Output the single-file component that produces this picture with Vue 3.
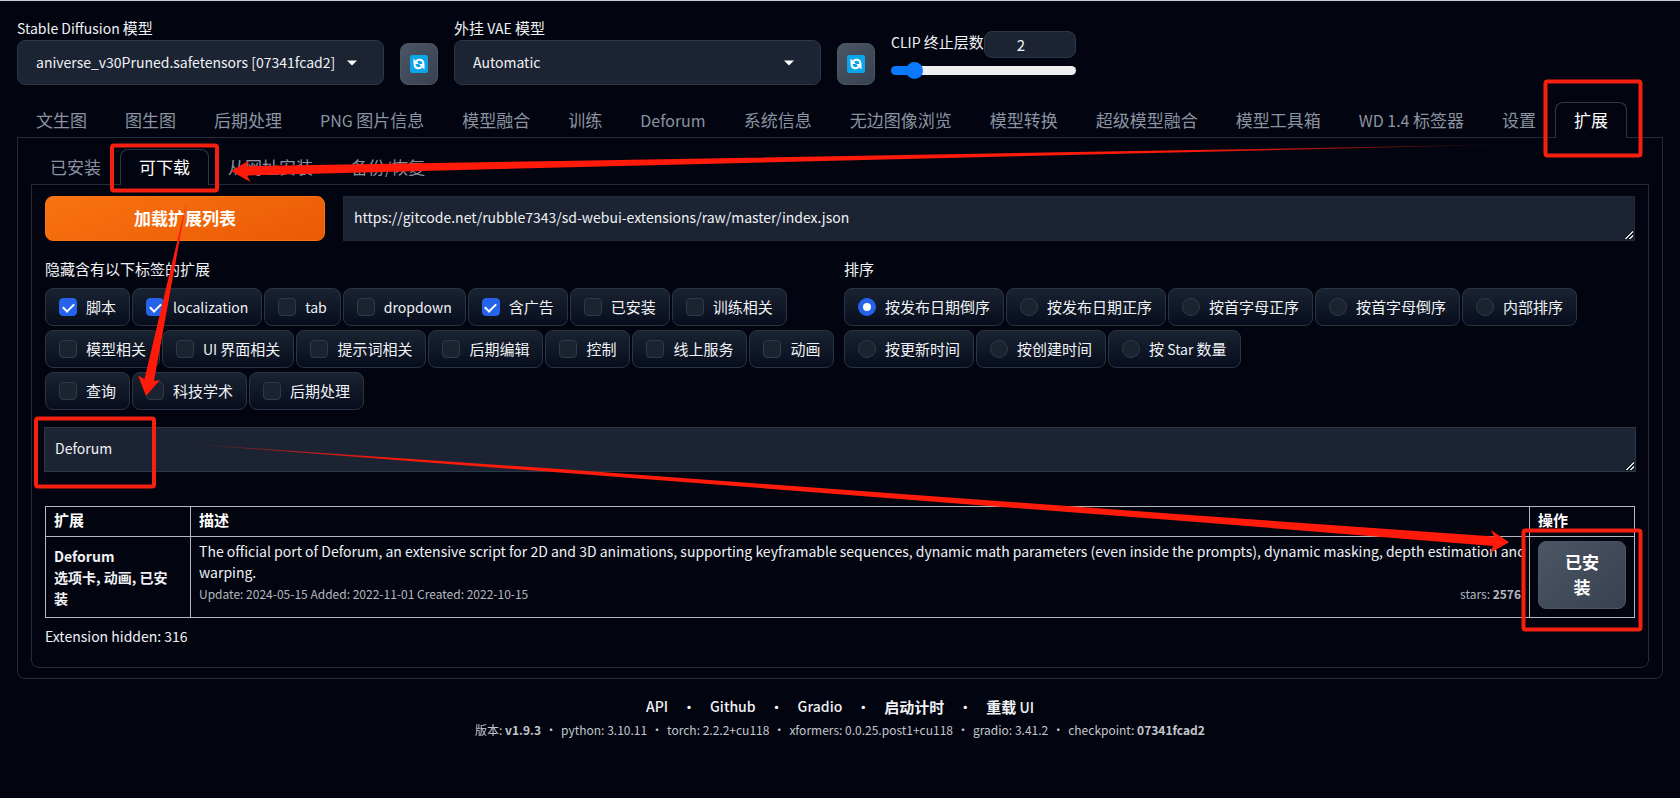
<script setup>
import { ref, h } from 'vue'

const checkpoint = ref('aniverse_v30Pruned.safetensors [07341fcad2]')
const vae = ref('Automatic')
const clipSkip = ref(2)
const indexUrl = ref('https://gitcode.net/rubble7343/sd-webui-extensions/raw/master/index.json')
const search = ref('Deforum')

const mainTabs = ['文生图', '图生图', '后期处理', 'PNG 图片信息', '模型融合', '训练', 'Deforum', '系统信息', '无边图像浏览', '模型转换', '超级模型融合', '模型工具箱', 'WD 1.4 标签器', '设置', '扩展']
const subTabs = ['已安装', '可下载', '从网址安装', '备份/恢复']
const activeMain = ref('扩展')
const activeSub = ref('可下载')

const tags = ['脚本', 'localization', 'tab', 'dropdown', '含广告', '已安装', '训练相关', '模型相关', 'UI 界面相关', '提示词相关', '后期编辑', '控制', '线上服务', '动画', '查询', '科技学术', '后期处理']
const hidden = ref(['脚本', 'localization', '含广告'])

const orders = ['按发布日期倒序', '按发布日期正序', '按首字母正序', '按首字母倒序', '内部排序', '按更新时间', '按创建时间', '按 Star 数量']
const order = ref('按发布日期倒序')

// Latin runs are set one size smaller than the Chinese text around them
const Mixed = (props) => h('span', props.text.split(/([ -~]+)/).filter(Boolean)
  .map((s) => h('span', { class: /^[ -~]/.test(s) ? 'latin' : 'han' }, s)))
Mixed.props = ['text']
</script>

<template>
  <div class="app">
    <header class="quick">
      <div class="field model">
        <label for="ckpt"><Mixed text="Stable Diffusion 模型" /></label>
        <div class="select">
          <select id="ckpt" v-model="checkpoint"><option>aniverse_v30Pruned.safetensors [07341fcad2]</option></select>
          <svg class="caret" viewBox="0 0 10 6"><path d="M0 0.5h10L5 5.5z" /></svg>
        </div>
      </div>
      <button class="refresh" aria-label="刷新模型">
        <svg viewBox="0 0 18 18"><rect width="18" height="18" rx="2" fill="#0aa5ea" /><g fill="none" stroke="#fff" stroke-width="2"><path d="M6 6.600C8 3.600 13.600 4 13.400 9" /><path d="M12 11.400C10 14.400 4.400 14 4.600 9" /></g><path d="M3.500 3.500V9H9z M14.500 14.500V9H9z" fill="#fff" /></svg>
      </button>
      <div class="field model">
        <label for="vae"><Mixed text="外挂 VAE 模型" /></label>
        <div class="select">
          <select id="vae" v-model="vae"><option>Automatic</option></select>
          <svg class="caret" viewBox="0 0 10 6"><path d="M0 0.5h10L5 5.5z" /></svg>
        </div>
      </div>
      <button class="refresh" aria-label="刷新 VAE">
        <svg viewBox="0 0 18 18"><rect width="18" height="18" rx="2" fill="#0aa5ea" /><g fill="none" stroke="#fff" stroke-width="2"><path d="M6 6.600C8 3.600 13.600 4 13.400 9" /><path d="M12 11.400C10 14.400 4.400 14 4.600 9" /></g><path d="M3.500 3.500V9H9z M14.500 14.500V9H9z" fill="#fff" /></svg>
      </button>
      <div class="clip">
        <div class="clip-head">
          <label for="clip"><Mixed text="CLIP 终止层数" /></label>
          <input id="clip" v-model="clipSkip" class="number" type="text" inputmode="numeric">
        </div>
        <input v-model="clipSkip" class="slider" type="range" min="1" max="12" aria-label="CLIP 终止层数">
      </div>
    </header>

    <nav class="tabs">
      <button v-for="t in mainTabs" :key="t" class="tab" :class="{ active: t === activeMain }" @click="activeMain = t"><Mixed :text="t" /></button>
    </nav>
    <main class="panel outer">
      <nav class="tabs">
        <button v-for="t in subTabs" :key="t" class="tab" :class="{ active: t === activeSub }" @click="activeSub = t"><Mixed :text="t" /></button>
      </nav>
      <section class="panel inner">
        <div class="load">
          <button class="primary">加载扩展列表</button>
          <textarea v-model="indexUrl" rows="1" aria-label="扩展列表网址"></textarea>
        </div>
        <div class="filters">
          <fieldset>
            <legend>隐藏含有以下标签的扩展</legend>
            <div class="chips">
              <label v-for="t in tags" :key="t" class="chip"><input v-model="hidden" type="checkbox" :value="t"><Mixed :text="t" /></label>
            </div>
          </fieldset>
          <fieldset>
            <legend>排序</legend>
            <div class="chips">
              <label v-for="o in orders" :key="o" class="chip"><input v-model="order" type="radio" name="order" :value="o"><Mixed :text="o" /></label>
            </div>
          </fieldset>
        </div>
        <textarea v-model="search" class="search" rows="1" aria-label="搜索"></textarea>
        <table>
          <thead>
            <tr><th class="c-ext">扩展</th><th>描述</th><th class="c-act">操作</th></tr>
          </thead>
          <tbody>
            <tr>
              <td class="ext"><b><a href="#">Deforum</a><br>选项卡, 动画, 已安装</b></td>
              <td class="desc">
                The official port of Deforum, an extensive script for 2D and 3D animations, supporting keyframable sequences, dynamic math parameters (even inside the prompts), dynamic masking, depth estimation and warping.
                <div class="info"><span>Update: 2024-05-15 Added: 2022-11-01 Created: 2022-10-15</span><span>stars: <b>2576</b></span></div>
              </td>
              <td class="act"><button class="installed">已安装</button></td>
            </tr>
          </tbody>
        </table>
        <p class="hidden-count">Extension hidden: 316</p>
      </section>
    </main>

    <footer>
      <div class="links">
        <a href="#">API</a><i>•</i><a href="#">Github</a><i>•</i><a href="#">Gradio</a><i>•</i><a href="#"><b>启动计时</b></a><i>•</i><a href="#"><b>重载</b> UI</a>
      </div>
      <div class="versions">
        <span>版本: <b>v1.9.3</b></span><i>•</i><span>python: 3.10.11</span><i>•</i><span>torch: 2.2.2+cu118</span><i>•</i><span>xformers: 0.0.25.post1+cu118</span><i>•</i><span>gradio: 3.41.2</span><i>•</i><span>checkpoint: <b>07341fcad2</b></span>
      </div>
    </footer>

    <svg class="marks" width="1680" height="798" viewBox="0 0 1680 798" aria-hidden="true">
      <defs>
        <linearGradient id="g1" gradientUnits="userSpaceOnUse" x1="1510" y1="0" x2="1180" y2="0"><stop offset="0" stop-color="#ff1a0a" stop-opacity="0.2" /><stop offset="1" stop-color="#ff1a0a" /></linearGradient>
        <linearGradient id="g3" gradientUnits="userSpaceOnUse" x1="182" y1="0" x2="400" y2="0"><stop offset="0" stop-color="#ff1a0a" stop-opacity="0.2" /><stop offset="1" stop-color="#ff1a0a" /></linearGradient>
      </defs>
      <g fill="none" stroke="#f5200f" stroke-width="4">
        <rect x="1545.500" y="81.500" width="95" height="74" rx="2" />
        <rect x="112" y="145.500" width="105" height="45" rx="2" />
        <rect x="36" y="418.500" width="118" height="68" rx="2" />
        <rect x="1523.500" y="530.500" width="117" height="99" rx="2" />
      </g>
      <path fill="url(#g1)" d="M231 171L249 160.500L246.500 166L560 161L1120 151.300L1510 144.500L1120 153.800L560 167.500L247 175.500L250.500 182Z" />
      <path fill="#ff1a0a" d="M146 396L138 375.500L144.500 379L186.500 202L154 381L160 380Z" />
      <path fill="url(#g3)" d="M1509 542.300L1491 530L1494 536.500L1200 515.700L560 469L182 443.500L560 472.500L1200 522.300L1493 546L1490 553Z" />
    </svg>
  </div>
</template>

<style>
html, body { margin: 0; background: #020510; }
</style>

<style scoped>
.app {
  position: relative;
  box-sizing: border-box;
  min-height: 100vh;
  padding: 16px 17px 0;
  border-top: 1px solid #c3ced6;
  background: #020510;
  color: #f0f2f5;
  font: 15px/22px "Noto Sans CJK SC", sans-serif;
}
.app * { box-sizing: border-box; }
.app :deep(.latin) { font-size: 14px; }
button, input, select, textarea { font: inherit; color: inherit; margin: 0; }
button { cursor: pointer; }
a { color: inherit; text-decoration: none; }
i { font-style: normal; }

.quick { display: flex; align-items: flex-end; gap: 16px; }
.field { display: flex; flex-direction: column; gap: 1px; }
.model { width: 367px; }
.select { position: relative; }
select {
  appearance: none;
  width: 100%;
  height: 45px;
  padding: 0 32px 2px 18px;
  border: 1px solid #2d3846;
  border-radius: 8px;
  background: #1c2433;
  font-size: 14px;
}
.caret { position: absolute; right: 27px; top: 20px; width: 10px; height: 6px; fill: #fff; }
.refresh {
  display: flex;
  align-items: center;
  justify-content: center;
  width: 38px;
  height: 42px;
  padding: 0;
  border: 1px solid #4b5563;
  border-radius: 8px;
  background: linear-gradient(135deg, #4b5563, #374151);
}
.refresh svg { width: 18px; height: 18px; }
.clip { width: 185px; align-self: stretch; padding-top: 14px; }
.clip-head { display: flex; justify-content: space-between; align-items: flex-start; white-space: nowrap; }
.number {
  flex: 0 0 92px;
  width: 92px;
  height: 27px;
  padding: 0 18px 0 0;
  border: 1px solid #2d3846;
  border-radius: 8px;
  background: #1c2433;
  text-align: center;
}
.slider { appearance: none; display: block; width: 100%; height: 18px; margin-top: 3px; background: transparent; }
.slider::-webkit-slider-runnable-track { height: 9px; border-radius: 5px; background: linear-gradient(90deg, #0a78ff 23px, #efefef 23px); }
.slider::-webkit-slider-thumb { appearance: none; width: 17px; height: 17px; margin-top: -4px; border-radius: 50%; background: #0a78ff; }

.tabs { display: flex; position: relative; margin-bottom: -1px; }
.quick + .tabs { margin-top: 17px; }
.tab {
  height: 36px;
  padding: 0 18px 2px;
  border: 1px solid transparent;
  border-bottom: 0;
  border-radius: 8px 8px 0 0;
  background: transparent;
  color: #8b93a0;
  font-size: 17px;
  line-height: 24px;
  white-space: nowrap;
}
.tab :deep(.latin) { font-size: 16px; }
.tab.active { border-color: #2d3846; background: #020510; color: #fff; }
.panel { border: 1px solid #242d3b; border-radius: 0 0 8px 8px; }
.outer { padding: 11px 13px 10px; }
.inner { padding: 11px 13px 20px; }

.load { display: flex; gap: 18px; }
.primary {
  flex: 0 0 280px;
  padding-bottom: 2px;
  border: 1px solid #f97316;
  border-radius: 8px;
  background: linear-gradient(160deg, #f97310, #ea5a05);
  color: #fff;
  font-size: 17px;
  font-weight: 700;
}
textarea {
  display: block;
  width: 100%;
  height: 45px;
  padding: 9px 10px;
  border: 1px solid #1f2937;
  border-radius: 0;
  background: #1c2433;
  font-size: 14px;
  resize: vertical;
  overflow: hidden;
}
textarea::-webkit-resizer {
  background: linear-gradient(135deg, transparent 46%, #0b0f18 46% 54%, #dde0e4 54% 64%, #0b0f18 64% 76%, #dde0e4 76% 88%, transparent 88%) right 1px bottom 1px / 9px 9px no-repeat;
}
.filters { display: grid; grid-template-columns: 1fr 1fr; gap: 8px; margin-top: 17px; }
fieldset { min-width: 0; margin: 0; padding: 0; border: 0; }
legend { padding: 0; }
.chips { display: flex; flex-wrap: wrap; gap: 4px 2px; margin-top: 8px; }
.chip {
  display: flex;
  align-items: center;
  gap: 9px;
  height: 38px;
  padding: 0 13px;
  border: 1px solid #2a3442;
  border-radius: 8px;
  background: linear-gradient(180deg, #1a2332, #070d1d);
  white-space: nowrap;
}
.chip input {
  appearance: none;
  width: 18px;
  height: 18px;
  border: 1px solid #2f3947;
  border-radius: 4px;
  background: #1b2331;
}
.chip input[type="radio"] { border-radius: 50%; }
.chip input:checked { border-color: #2563eb; background: #2563eb; }
.chip input[type="checkbox"]:checked::after {
  content: "";
  display: block;
  width: 5px;
  height: 9px;
  margin: 2px auto 0;
  border: solid #fff;
  border-width: 0 2px 2px 0;
  transform: rotate(45deg);
}
.chip input[type="radio"]:checked::after {
  content: "";
  display: block;
  width: 8px;
  height: 8px;
  margin: 4px auto;
  border-radius: 50%;
  background: #fff;
}
.search { width: auto; min-width: calc(100% + 2px); margin: 17px -1px 0; border-color: #2d3846; }

table { width: 100%; margin-top: 34px; border-collapse: collapse; table-layout: fixed; line-height: 21px; }
th, td { border: 1px solid #b5b9be; padding: 4px 8px; text-align: left; }
th { height: 30px; padding-top: 2px; padding-bottom: 6px; font-weight: 700; color: #fff; }
td { height: 81px; font-size: 14px; }
.ext { padding-right: 16px; }
.desc { padding-right: 2px; vertical-align: top; }
.act { vertical-align: top; }
.c-ext { width: 145px; }
.c-act { width: 105px; }
.info { display: flex; justify-content: space-between; padding-right: 6px; color: #b4b8be; font-size: 12px; }
.installed {
  display: block;
  width: 100%;
  height: 68px;
  padding: 0 24px 2px;
  border: 1px solid #4b5563;
  border-radius: 8px;
  background: linear-gradient(135deg, #4b5563, #374151);
  color: #fff;
  font-size: 17px;
  font-weight: 700;
  line-height: 25px;
}
.hidden-count { margin: 7px 0 0; font-size: 14px; }

footer { text-align: center; margin-top: 16px; }
.links, .versions { display: flex; justify-content: center; white-space: nowrap; }
.links { font-size: 14px; font-weight: 500; line-height: 23px; }
.links b { font-size: 15px; }
.links i { width: 42px; }
.versions { color: #c3c7cc; font-size: 12px; }
.versions i { width: 20px; }
.marks { position: absolute; left: 0; top: -1px; pointer-events: none; }
</style>
